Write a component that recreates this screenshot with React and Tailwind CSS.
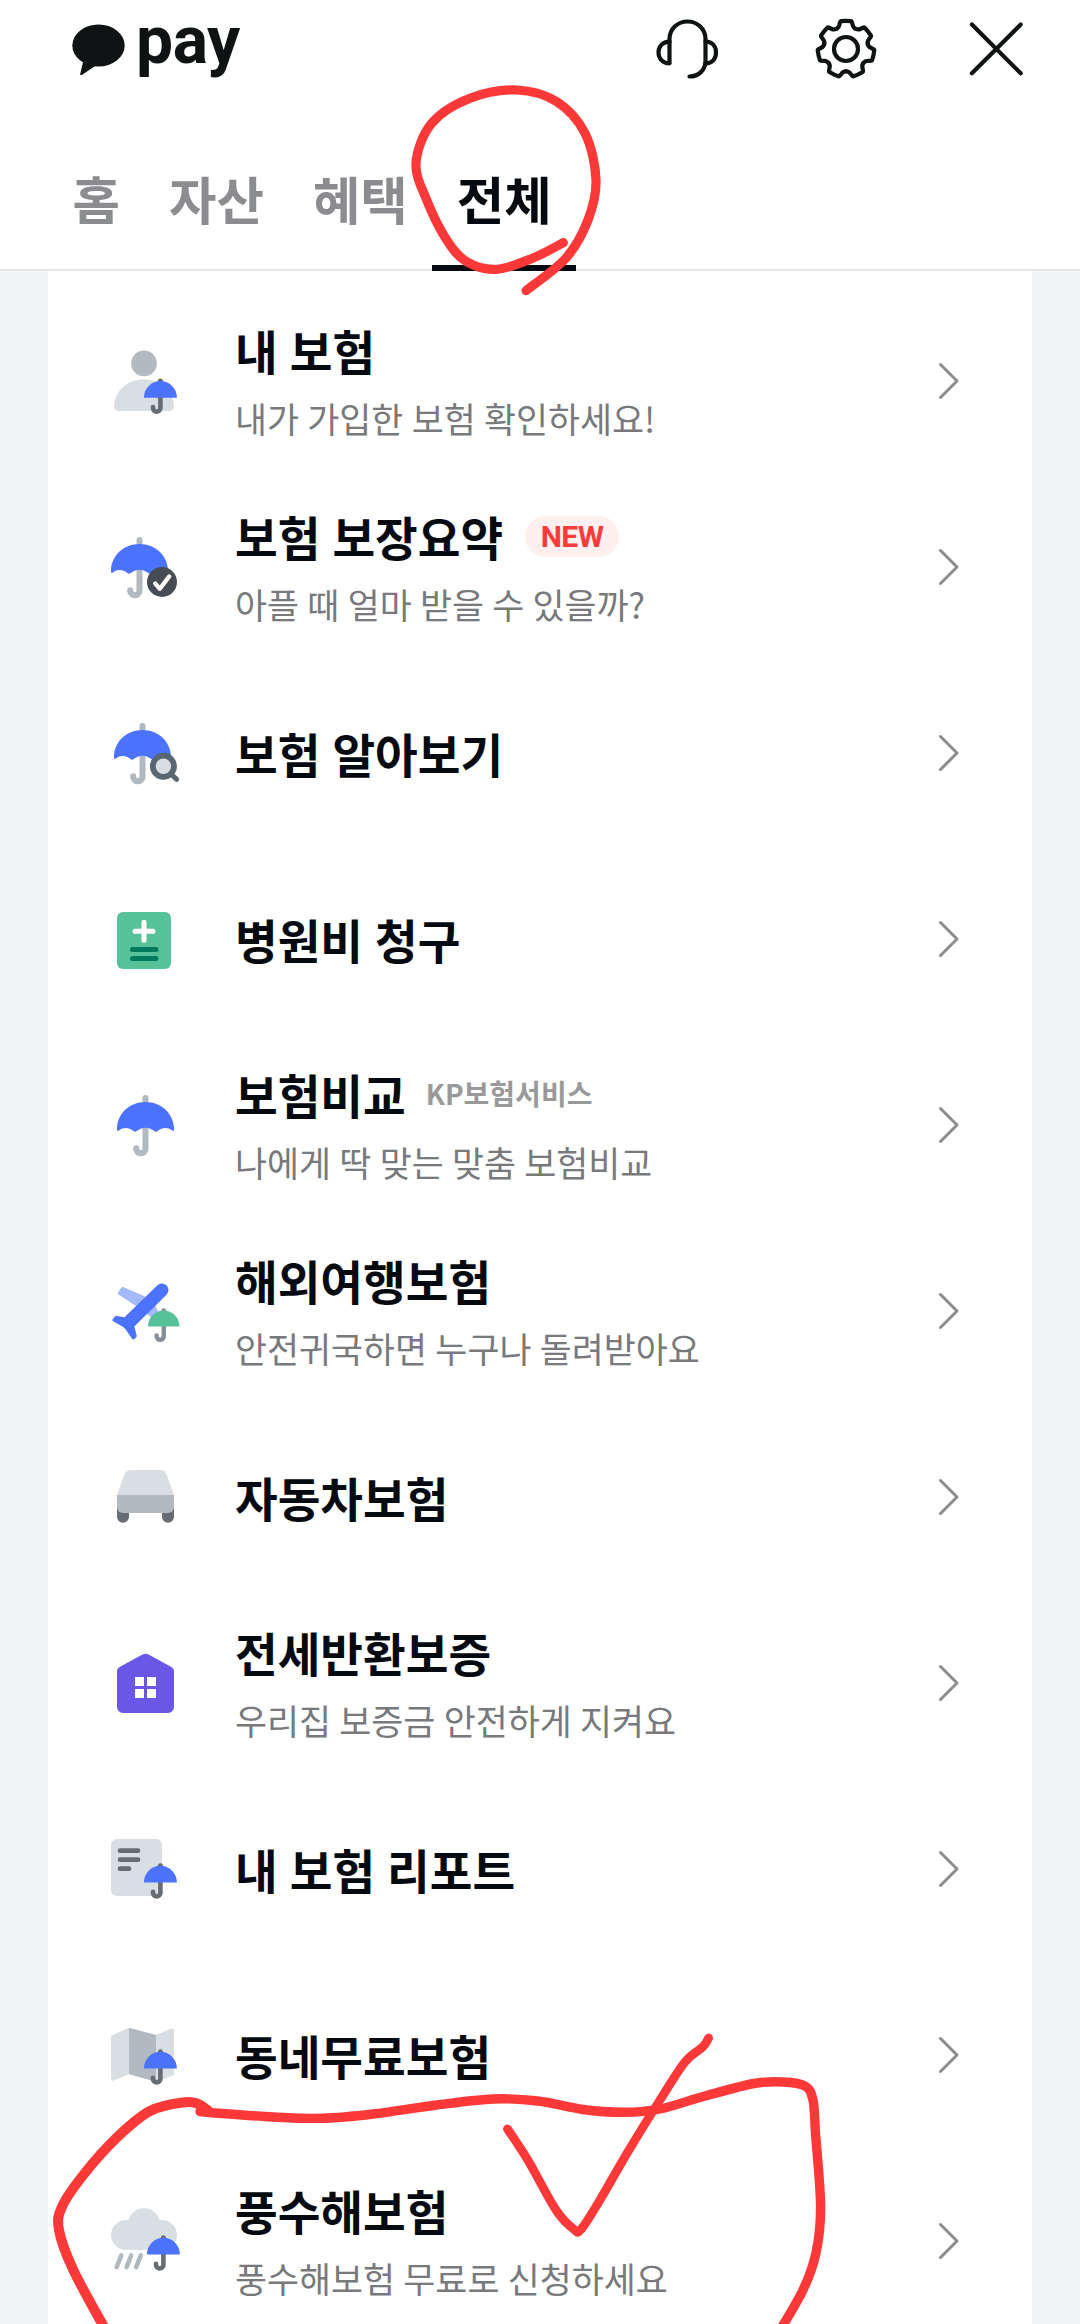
import React from "react";

const BLUE = "#4c73ff";
const LIGHT = "#d9dee2";
const GRAY = "#b1bac1";
const DARK = "#666c72";

const tabs = [
  { id: "home", label: "홈" },
  { id: "asset", label: "자산" },
  { id: "benefit", label: "혜택" },
  { id: "all", label: "전체" },
];

const SmallUmbrella = ({ x = 0, y = 0, color = BLUE, stick = DARK }) => (
  <g transform={`translate(${x} ${y})`}>
    <circle cx="52.4" cy="36" r="2.5" fill={stick} />
    <path d="M52.4 51V63a3.7 3.7 0 0 1-7.4 0v-1" fill="none" stroke={stick} strokeWidth="4.6" strokeLinecap="round" />
    <path d="M35.9 52.7a16.5 16.7 0 0 1 33 0z" fill={color} />
  </g>
);

const BigUmbrella = ({ x = 0 }) => (
  <g transform={`translate(${x} 0)`}>
    <path d="M31.5 9V60.3a4.7 4.7 0 0 1-9.3 0v-1" fill="none" stroke={GRAY} strokeWidth="6" strokeLinecap="round" />
    <path
      d="M3 41V38.5C4 24 16 13 31.5 13S59 24 60 38.5V41c-.2 1-1.2 1.1-2 .4-4.5-3.2-10-3-14 .4-1.5 1.2-3 1.2-4.5-.2-4.5-3.9-11.5-3.9-16 0-1.5 1.4-3 1.4-4.5.2-4-3.4-9.5-3.6-14-.4-.8.7-1.8.6-2-.4z"
      fill={BLUE}
    />
  </g>
);

const icons = {
  person: (
    <>
      <circle cx="36" cy="18.4" r="12.8" fill={GRAY} />
      <path d="M6 60C8 45 19 34.5 36 34.5S64 45 66 60c.4 4-2 6-5 6H11c-3.5 0-5.4-2.5-5-6z" fill={LIGHT} />
      <SmallUmbrella />
    </>
  ),
  check: (
    <>
      <BigUmbrella />
      <circle cx="54" cy="51" r="15" fill="#464c53" />
      <path d="M47.2 52.5l4.6 5.3 9.5-12.4" fill="none" stroke="#fff" strokeWidth="4.2" strokeLinecap="round" strokeLinejoin="round" />
    </>
  ),
  search: (
    <>
      <BigUmbrella x={3} />
      <path d="M63 57l5.7 5.3" stroke="#596673" strokeWidth="5" strokeLinecap="round" />
      <circle cx="55.4" cy="49.3" r="10.6" fill={LIGHT} stroke="#596673" strokeWidth="5.8" />
    </>
  ),
  hospital: (
    <>
      <rect x="9" y="9" width="54" height="57" rx="6" fill="#57c29a" />
      <path d="M27 28.3h18M36 19.3v18" stroke="#fff" strokeWidth="5" strokeLinecap="round" />
      <path d="M24.5 46.5h23.5M24.5 55.5h23.5" stroke="#007a5e" strokeWidth="5" strokeLinecap="round" />
    </>
  ),
  umbrella: <BigUmbrella x={6} />,
  plane: (
    <>
      <path d="M10 17.5l3-4.5c.8-1 2-1.2 3.2-.6L37 21.5l9.5 8L54 44l-7 1-19-14-17.5-11.5c-.8-.5-1-1.2-.5-2z" fill="#a5b9ff" />
      <path
        d="M49.2 10.5a6.4 6.4 0 0 1 9.5 9L26.3 51.5l2.4 9c.2 1-.2 1.7-1 2.3l-1.6 1.3c-.8.6-1.8.4-2.2-.5L17.7 54.5 15.2 52 5.2 46.3c-1-.6-1.1-1.6-.4-2.3l2.2-2.5c.6-.6 1.2-.8 2-.6l7.5 1.4z"
        fill={BLUE}
      />
      <g transform="translate(5.7 1.2) scale(.955)">
        <SmallUmbrella color="#57c29a" stick="#868e96" />
      </g>
    </>
  ),
  car: (
    <>
      <path d="M9 46h12v9.7a6 6 0 0 1-12 0zM54 46h12v9.7a6 6 0 0 1-12 0z" fill={DARK} />
      <path d="M9 34l7.2-20c1.2-3.3 3.8-5 7-5h28.6c3.2 0 5.8 1.7 7 5L66 34z" fill={LIGHT} />
      <path d="M9 34h57v12a6 6 0 0 1-6 6H15a6 6 0 0 1-6-6z" fill={GRAY} />
    </>
  ),
  house: (
    <>
      <path d="M9 24.5c0-2 .8-3.4 2.6-4.5L34.5 7.5c2-1.1 4-1.1 6 0L63.4 20c1.8 1.1 2.6 2.5 2.6 4.5V60a6 6 0 0 1-6 6H15a6 6 0 0 1-6-6z" fill="#6a57e5" />
      <path d="M27 30h9v9h-9zM39 30h9v9h-9zM27 42h9v9h-9zM39 42h9v9h-9z" fill="#fff" />
    </>
  ),
  report: (
    <>
      <rect x="3" y="6" width="51" height="57" rx="6" fill={LIGHT} />
      <path d="M12 17.7h18M12 26.7h18M12 35.7h9" stroke={DARK} strokeWidth="4.7" strokeLinecap="round" />
      <SmallUmbrella y={-3.2} />
    </>
  ),
  map: (
    <>
      <path d="M3 18.5c0-1.5.5-2.2 2-2.8L21 8.7v46.6L6 61.5c-1.7.6-3 0-3-2z" fill={LIGHT} />
      <path d="M48 16l15-6.2c1.7-.6 3 .2 3 2V56l-18 7z" fill={LIGHT} />
      <path d="M21 8.7L48 16v46.7l-27-7.4z" fill={GRAY} />
      <SmallUmbrella y={-3.2} />
    </>
  ),
  rain: (
    <>
      <path d="M18 15h2.6a16 16 0 0 1 30.8 0H54a15 15 0 0 1 0 30H18a15 15 0 0 1 0-30z" fill={LIGHT} />
      <path d="M13.3 50.5L8.7 62M23.2 50.5L18.6 62M32.8 50.5L28.2 62" stroke={GRAY} strokeWidth="4.6" strokeLinecap="round" />
      <SmallUmbrella x={3} y={-3.2} />
    </>
  ),
};

const menus = [
  { icon: "person", title: "내 보험", desc: "내가 가입한 보험 확인하세요!" },
  { icon: "check", title: "보험 보장요약", desc: "아플 때 얼마 받을 수 있을까?", isNew: true },
  { icon: "search", title: "보험 알아보기" },
  { icon: "hospital", title: "병원비 청구" },
  { icon: "umbrella", title: "보험비교", desc: "나에게 딱 맞는 맞춤 보험비교", provider: "KP보험서비스" },
  { icon: "plane", title: "해외여행보험", desc: "안전귀국하면 누구나 돌려받아요" },
  { icon: "car", title: "자동차보험" },
  { icon: "house", title: "전세반환보증", desc: "우리집 보증금 안전하게 지켜요" },
  { icon: "report", title: "내 보험 리포트" },
  { icon: "map", title: "동네무료보험" },
  { icon: "rain", title: "풍수해보험", desc: "풍수해보험 무료로 신청하세요" },
];

// turns a list of points into a smooth curve through all of them
const smoothPath = (pts) => {
  let d = `M${pts[0][0]} ${pts[0][1]}`;
  for (let i = 0; i < pts.length - 1; i++) {
    const p0 = pts[i - 1] || pts[i];
    const p1 = pts[i];
    const p2 = pts[i + 1];
    const p3 = pts[i + 2] || p2;
    d += `C${p1[0] + (p2[0] - p0[0]) / 6} ${p1[1] + (p2[1] - p0[1]) / 6} ${p2[0] - (p3[0] - p1[0]) / 6} ${p2[1] - (p3[1] - p1[1]) / 6} ${p2[0]} ${p2[1]}`;
  }
  return d;
};

const strokes = [
  {
    width: 9.2,
    points: [[563.3, 242.7], [533, 258], [496.7, 269.3], [466.7, 261.7], [446.7, 240], [426.7, 200], [416, 163.3], [431.7, 123.3], [470, 98.3], [516.7, 90], [556.7, 101.7], [585, 133.3], [596, 180], [588, 220], [566, 258], [526, 290.7]],
  },
  {
    width: 9.4,
    points: [[200, 2111.5], [211.7, 2112.7], [273, 2117], [323, 2118.3], [373, 2114], [436.7, 2105], [493, 2099], [538, 2101], [583, 2109.5], [623.7, 2112.3], [660, 2109], [705, 2096], [754, 2083.5], [783, 2082], [805, 2086], [813, 2100], [815.5, 2133], [820.6, 2206.7], [816, 2253], [803, 2290], [779, 2332]],
  },
  {
    width: 10,
    points: [[208, 2110.5], [198, 2104], [185, 2102.2], [150, 2111], [116.7, 2137.7], [83.3, 2175], [62, 2206.7], [59, 2230], [73.3, 2270], [106.7, 2332]],
  },
  {
    width: 8.8,
    points: [[507.5, 2129], [527.8, 2160], [556, 2210], [574, 2229.5], [581, 2229.5], [599, 2201.7], [627.8, 2152], [660, 2100], [685, 2062], [703, 2046.7], [708.6, 2038]],
  },
];

const PenMarks = () => (
  <svg className="pointer-events-none absolute left-0 top-0" width="1080" height="2324" viewBox="0 0 1080 2324" fill="none" stroke="#fd3838" strokeLinecap="round" strokeLinejoin="round">
    {strokes.map((s, idx) => (
      <path key={idx} d={smoothPath(s.points)} strokeWidth={s.width} />
    ))}
  </svg>
);

const Header = () => (
  <header className="flex h-[98px] items-center justify-between pl-[72px] pr-[56px]">
    <div className="flex h-full items-center gap-[10px]">
      <svg width="54" height="52" viewBox="0 0 54 52" fill="#101314">
        <ellipse cx="26.5" cy="22.5" rx="26.2" ry="21" />
        <path d="M11.5 37L8.2 51c-.2 1.2.7 1.7 1.7 1L26 41z" />
      </svg>
      <span className="h-full font-[Roboto,sans-serif] text-[66px] font-bold leading-[82px] tracking-[-0.5px] text-[#101314]">
        pay
      </span>
    </div>
    <div className="flex items-center gap-[86.5px]">
      <svg width="72" height="72" viewBox="0 0 72 72" fill="none" stroke="#101314" strokeWidth="4.2" strokeLinecap="round" strokeLinejoin="round">
        <path d="M18.5 49.5V26c0-10 8-17.5 18-17.5s18 7.5 18 17.5v22c0 9-7 15.5-16 15.5" />
        <path d="M18.5 28.7c-7 0-11 5-11 10.8s4 10.8 11 10.8M54.5 28.7c7 0 10.5 5 10.5 10.8s-3.5 10.8-10.5 10.8" />
      </svg>
      <svg width="72" height="72" viewBox="-36 -36 72 72" fill="none" stroke="#101314" strokeWidth="4.2" strokeLinecap="round" strokeLinejoin="round">
        {[0, 1, 2, 3, 4, 5, 6].map((n) => (
          <path key={n} transform={`rotate(${(n * 360) / 7})`} d="M-9.7-20.1C-7.8-21-7-22.3-6.7-24l.9-3.2q.2-.6.8-.7Q0-28.4 5-27.9q.6.1.8.7l.9 3.2C7-22.3 7.8-21 9.7-20.1" />
        ))}
        <circle r="12" />
      </svg>
      <svg width="56" height="72" viewBox="0 0 56 72" fill="none" stroke="#101314" strokeWidth="4.2" strokeLinecap="round">
        <path d="M3.9 11.5l48.8 48.8M52.7 11.5L3.9 60.3" />
      </svg>
    </div>
  </header>
);

const MenuRow = ({ item }) => (
  <li className="flex h-[186px] items-center pl-[60px] pr-[72px]">
    <svg className="shrink-0 overflow-visible" width="72" height="72" viewBox="0 0 72 72">
      {icons[item.icon]}
    </svg>
    <div className={item.desc ? "ml-[55px] flex flex-1 flex-col pt-[2px]" : "ml-[55px] flex flex-1 flex-col pb-[2px]"}>
      <div className="flex h-[72px] items-center">
        <h3 className="whitespace-nowrap text-[46.4px] font-bold leading-[71px] text-[#050a10] [word-spacing:1.5px]">
          {item.title}
        </h3>
        {item.isNew && (
          <span className="ml-[22px] mt-[3px] flex h-[41px] w-[94px] items-center justify-center rounded-full bg-[#ffefee] font-[Roboto,sans-serif] text-[30px] font-bold tracking-[-0.5px] text-[#f83c3c]">
            NEW
          </span>
        )}
        {item.provider && (
          <span className="ml-[20px] whitespace-nowrap text-[28px] font-bold leading-[40px] text-[#999]">{item.provider}</span>
        )}
      </div>
      {item.desc && (
        <p className="h-[66px] whitespace-nowrap text-[34.8px] leading-[67px] text-[#77797c] [word-spacing:0.5px]">{item.desc}</p>
      )}
    </div>
    <svg width="24" height="40" viewBox="0 0 24 40" fill="none" stroke="#8c8c8e" strokeWidth="3" strokeLinecap="round" strokeLinejoin="round">
      <path d="M4.5 3.5L21 20 4.5 36.5" />
    </svg>
  </li>
);

const App = () => {
  const activeTab = "all";

  return (
    <div className="relative flex h-[2324px] w-[1080px] flex-col overflow-hidden bg-white font-['Noto_Sans_CJK_KR',sans-serif]">
      <Header />

      {/* Tabs */}
      <nav className="flex h-[173px] shrink-0 items-end border-b-2 border-[#e5e6e8] pl-[48px]">
        {tabs.map((tab) => (
          <div
            key={tab.id}
            className={
              tab.id === activeTab
                ? "-mb-[2px] h-[112px] border-b-[6px] border-[#050a10] px-[24.5px] text-[51.6px] font-bold leading-[78px] text-[#050a10]"
                : "-mb-[2px] h-[112px] px-[24.5px] text-[51.6px] font-bold leading-[78px] text-[#8b8c8f]"
            }
          >
            {tab.label}
          </div>
        ))}
      </nav>

      {/* Menu list */}
      <main className="flex-1 overflow-hidden bg-[#f3f4f6] px-[48px]">
        <ul className="bg-white pt-[17px]">
          {menus.map((item) => (
            <MenuRow key={item.title} item={item} />
          ))}
        </ul>
      </main>

      <PenMarks />
    </div>
  );
};

export default App;
